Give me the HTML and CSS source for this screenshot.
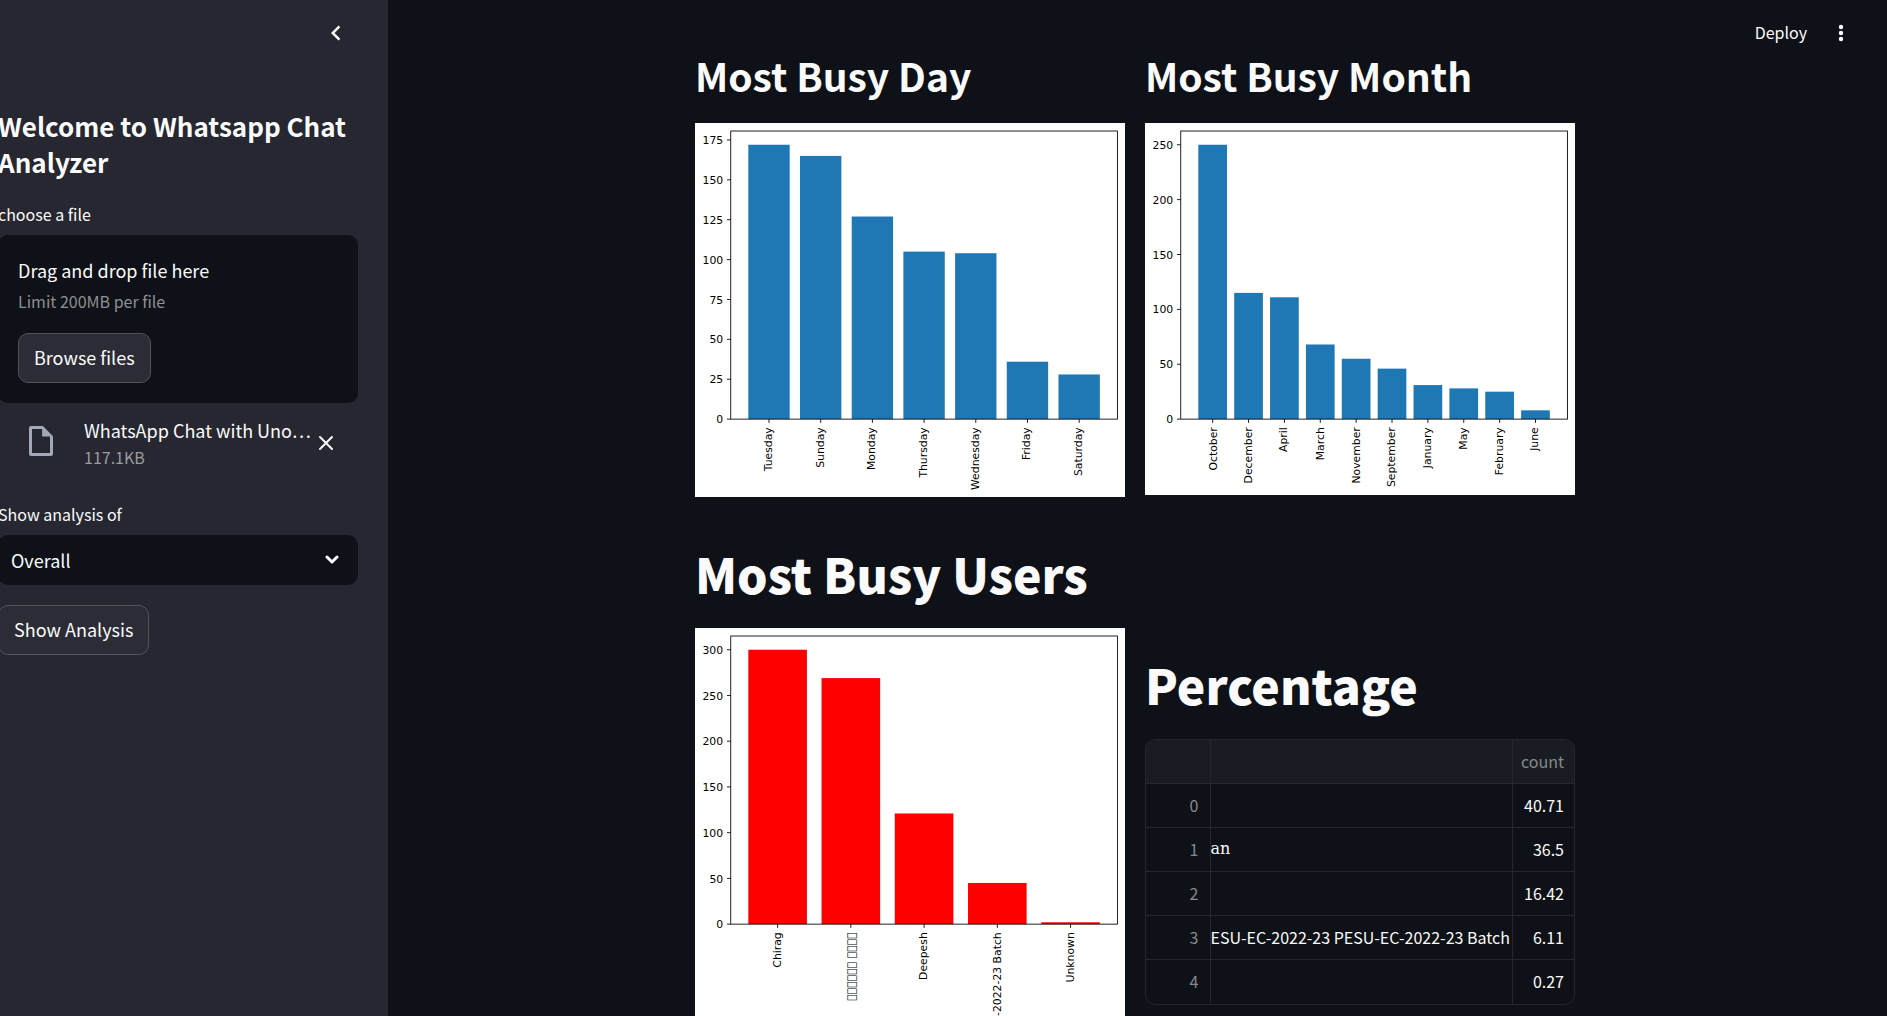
FILE: index.html
```html
<!DOCTYPE html>
<html lang="en">
<head>
<meta charset="utf-8">
<title>Whatsapp Chat Analyzer</title>
<link rel="stylesheet" href="styles.css">
</head>
<body>
<div class="app">
  <aside class="sidebar">
    <div class="sidebar-top">
      <button class="icon-button" type="button" aria-label="Collapse sidebar">
        <svg width="30" height="30" viewBox="0 0 24 24"><path fill="currentColor" d="M15.410 7.410 14 6l-6 6 6 6 1.410-1.410L10.830 12z"/></svg>
      </button>
    </div>
    <h2 class="sidebar-title">Welcome to Whatsapp Chat Analyzer</h2>
    <label class="field-label" for="file-browse">choose a file</label>
    <section class="dropzone">
      <span class="drop-title">Drag and drop file here</span>
      <span class="drop-note">Limit 200MB per file</span>
      <button class="button" id="file-browse" type="button">Browse files</button>
    </section>
    <div class="file-row">
      <svg class="file-icon" width="30" height="30" viewBox="0 0 8 8"><path fill="currentColor" d="M1.400 0C1 0 .8 .2 .8 .6v6.800c0 .4 .2 .6 .6 .6h5.200c.4 0 .6-.2 .6-.6V2.700L4.500 0zM1.600 .8h2.700v2h2.100v4.400H1.600z"/></svg>
      <div class="file-info">
        <span class="file-name">WhatsApp Chat with Uno…</span>
        <span class="file-size">117.1KB</span>
      </div>
      <button class="icon-button" type="button" aria-label="Remove file">
        <svg width="16" height="16" viewBox="0 0 16 16"><path d="M2 2l12 12M14 2L2 14" stroke="currentColor" stroke-width="2" stroke-linecap="round"/></svg>
      </button>
    </div>
    <label class="field-label" for="user-select">Show analysis of</label>
    <div class="select-wrap">
      <select class="select" id="user-select"><option>Overall</option></select>
      <svg class="select-arrow" width="14" height="10" viewBox="0 0 14 10"><path d="M2 2l5 5 5-5" fill="none" stroke="currentColor" stroke-width="3" stroke-linecap="round" stroke-linejoin="round"/></svg>
    </div>
    <button class="button" type="button">Show Analysis</button>
  </aside>
  <main class="main">
    <header class="toolbar">
      <button class="deploy" type="button">Deploy</button>
      <button class="icon-button" type="button" aria-label="Menu">
        <svg width="24" height="24" viewBox="0 0 24 24" fill="currentColor"><circle cx="12" cy="6" r="2.200"/><circle cx="12" cy="12" r="2.200"/><circle cx="12" cy="18" r="2.200"/></svg>
      </button>
    </header>
    <div class="content">
      <div class="columns">
        <section>
          <h2 class="chart-title">Most Busy Day</h2>
          <svg class="chart" id="chart-day" role="img" aria-label="Messages per day"></svg>
        </section>
        <section>
          <h2 class="chart-title">Most Busy Month</h2>
          <svg class="chart" id="chart-month" role="img" aria-label="Messages per month"></svg>
        </section>
      </div>
      <h1 class="section-title">Most Busy Users</h1>
      <div class="columns">
        <section>
          <svg class="chart" id="chart-users" role="img" aria-label="Messages per user"></svg>
        </section>
        <section class="percentage">
          <h1 class="section-title">Percentage</h1>
          <div class="table-frame">
            <table class="table">
              <thead><tr><th class="index"></th><th></th><th class="count">count</th></tr></thead>
              <tbody>
                <tr><td class="index">0</td><td></td><td class="count">40.71</td></tr>
                <tr><td class="index">1</td><td class="serif">an</td><td class="count">36.5</td></tr>
                <tr><td class="index">2</td><td></td><td class="count">16.42</td></tr>
                <tr><td class="index">3</td><td>ESU-EC-2022-23 PESU-EC-2022-23 Batch</td><td class="count">6.11</td></tr>
                <tr><td class="index">4</td><td></td><td class="count">0.27</td></tr>
              </tbody>
            </table>
          </div>
        </section>
      </div>
    </div>
  </main>
</div>
<script src="charts.js"></script>
</body>
</html>
```
FILE: charts.js
```js
// Bar charts, drawn in points: a 357 x 266 plot area with 10pt labels.
const NS = "http://www.w3.org/2000/svg";
const LEFT = 33, TOP = 7.4, WIDTH = 357, HEIGHT = 266, FULL = 397;

function add(parent, tag, attrs, text) {
  const node = document.createElementNS(NS, tag);
  for (const key in attrs) node.setAttribute(key, attrs[key]);
  if (text !== undefined) node.textContent = text;
  parent.appendChild(node);
}

function barChart(id, rows, step, fill, fullHeight) {
  const svg = document.getElementById(id);
  svg.setAttribute("viewBox", `0 0 ${FULL} ${fullHeight}`);
  const bottom = TOP + HEIGHT;
  const span = (rows.length - 0.2) * 1.1;
  const unit = WIDTH / span;
  const top = Math.max(...rows.map(r => r[1])) * 1.05;
  const margin = (rows.length - 0.2) * 0.05 * unit;

  rows.forEach(([label, value], i) => {
    const x = LEFT + margin + i * unit;
    const mid = x + 0.4 * unit;
    const h = value / top * HEIGHT;
    add(svg, "rect", { x, y: bottom - h, width: 0.8 * unit, height: h, fill });
    add(svg, "line", { class: "axis", x1: mid, x2: mid, y1: bottom, y2: bottom + 3.5 });
    const shift = /[gjpyJ]/.test(label) ? 2.7 : 3.6;
    add(svg, "text", { class: "tick", transform: `translate(${mid + shift} ${bottom + 7.5}) rotate(-90)` }, label);
  });
  for (let v = 0; v <= top; v += step) {
    const y = bottom - v / top * HEIGHT;
    add(svg, "line", { class: "axis", x1: LEFT - 3.5, x2: LEFT, y1: y, y2: y });
    add(svg, "text", { class: "tick", x: LEFT - 7, y: y + 3.8 }, v);
  }
  add(svg, "rect", { class: "axis", x: LEFT, y: TOP, width: WIDTH, height: HEIGHT });
}

barChart("chart-day", [["Tuesday", 172], ["Sunday", 165], ["Monday", 127], ["Thursday", 105],
  ["Wednesday", 104], ["Friday", 36], ["Saturday", 28]], 25, "#1f77b4", 345);
barChart("chart-month", [["October", 250], ["December", 115], ["April", 111], ["March", 68],
  ["November", 55], ["September", 46], ["January", 31], ["May", 28], ["February", 25], ["June", 8]], 50, "#1f77b4", 343);
barChart("chart-users", [["Chirag", 300], ["\uE5A0\uE5A0\uE5A0\uE5A0\uE5A0\uE5A0 \uE5A0\uE5A0\uE5A0\uE5A0", 269],
  ["Deepesh", 121], ["PESU-EC-2022-23 PESU-EC-2022-23 Batch", 45], ["Unknown", 2]], 50, "#ff0000", 516);
```
FILE: styles.css
```css
* { box-sizing: border-box; }

body {
  margin: 0;
  background: #0e1117;
  color: #fafafa;
  font-family: "Noto Sans CJK KR", "Noto Sans", sans-serif;
  font-size: 18px;
  line-height: 32px;
}

h1, h2 { margin: 0; }
button, select { font: inherit; color: inherit; }
svg { display: block; }

.app { display: flex; height: 100vh; overflow: hidden; }

/* The sidebar sits partly beyond the left edge of the window. */
.sidebar {
  flex: none;
  width: 420px;
  margin-left: -32px;
  padding: 0 30px;
  background: #262730;
}

.sidebar-top { display: flex; justify-content: flex-end; padding: 21px 10px 0 0; height: 108px; }
.icon-button { display: flex; padding: 0; border: 0; background: none; width: 24px; height: 24px; align-items: center; justify-content: center; }
.icon-button svg { flex: none; }
.sidebar-title { font-size: 26px; line-height: 36px; font-weight: 700; padding-bottom: 18px; }
.field-label { display: block; font-size: 16px; line-height: 32px; padding-bottom: 5px; }

.dropzone {
  display: flex;
  flex-direction: column;
  align-items: flex-start;
  padding: 19px 20px 20px;
  border-radius: 10px;
  background: #0e1117;
}
.drop-title { line-height: 32px; }
.drop-note { font-size: 16px; line-height: 30px; color: #8e8f92; padding-bottom: 17px; }
.button {
  height: 50px;
  padding: 0 15px 2px;
  border: 1px solid #51525a;
  border-radius: 10px;
  background: #2b2c36;
  line-height: 32px;
}

.file-row { display: flex; align-items: center; padding: 13px 20px 28px 28px; }
.file-icon { color: #a3a8b8; margin-bottom: 4px; }
.file-info { flex: 1; min-width: 0; padding-left: 28px; }
.file-name { display: block; line-height: 28px; white-space: nowrap; }
.file-size { display: block; font-size: 16px; line-height: 26px; color: #9b9b9f; }

.select-wrap { display: grid; align-items: center; margin-bottom: 20px; }
.select {
  grid-area: 1 / 1;
  width: 100%;
  height: 50px;
  padding: 0 13px;
  border: 0;
  border-radius: 10px;
  background: #0e1117;
  appearance: none;
}
.select-arrow { grid-area: 1 / 1; justify-self: end; margin-right: 19px; pointer-events: none; }

.main { flex: 1; min-width: 0; padding-right: 5px; }
.toolbar { display: flex; justify-content: flex-end; align-items: center; gap: 22px; height: 48px; padding: 18px 29px 0 0; }
.deploy { border: 0; padding: 0 0 2px; background: none; font-size: 16px; line-height: 32px; }

.content { max-width: 880px; margin: 0 auto; }
.columns { display: grid; grid-template-columns: 1fr 1fr; gap: 20px; align-items: start; }
.chart-title { font-size: 39px; line-height: 54px; font-weight: 700; padding-bottom: 21px; }
.section-title { font-size: 48px; line-height: 66px; font-weight: 900; }
.content > .section-title { padding-top: 43px; padding-bottom: 22px; }

.chart { width: 100%; background: #fff; }
.tick { font-family: "DejaVu Sans", sans-serif; font-size: 10px; fill: #000; text-anchor: end; }
.axis { fill: none; stroke: #000; stroke-width: 0.8; }

.percentage { padding-top: 23px; }
.percentage .section-title { padding-bottom: 22px; }
.table-frame { border: 1px solid #25282e; border-radius: 10px; overflow: hidden; }
.table { width: 100%; border-collapse: collapse; table-layout: fixed; font-size: 16px; line-height: 24px; }
.table th, .table td { height: 44px; padding: 0 0 1px; text-align: left; font-weight: 400; border-top: 1px solid #25282e; border-left: 1px solid #25282e; white-space: nowrap; }
.table th { background: #1a1c23; border-top: 0; }
.table th.index, .table td.index { width: 64px; border-left: 0; padding-right: 11px; text-align: right; color: #87898c; }
.table th.count, .table td.count { width: 62px; padding-right: 10px; text-align: right; }
.table th.count { color: #87898c; }
.table .serif { font-family: "DejaVu Serif", serif; }
```
